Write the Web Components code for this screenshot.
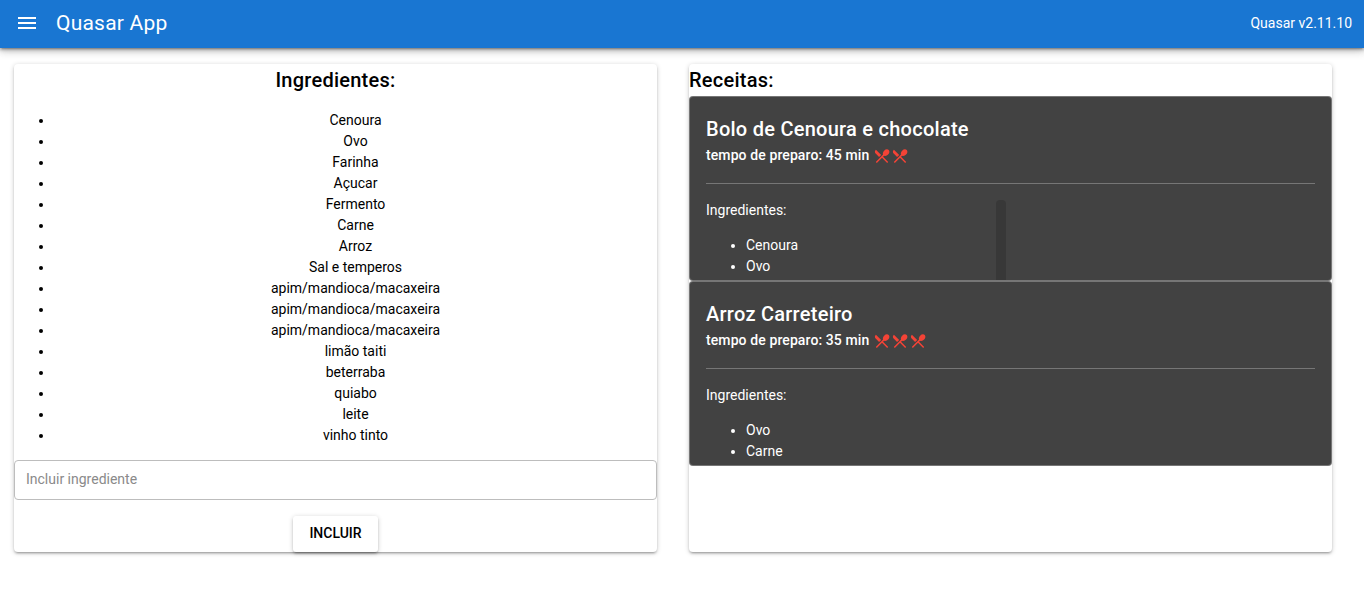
<!DOCTYPE html>
<html lang="pt">
<head>
<meta charset="utf-8">
<title>Quasar App</title>
<style>
html, body { margin: 0; height: 100%; background: #fff; }
body { font-family: Roboto, "Liberation Sans", sans-serif; font-size: 14px; line-height: 21px; color: #000; overflow: hidden; }
</style>
</head>
<body>
<app-header></app-header>
<app-page>
  <ingredient-card></ingredient-card>
  <recipe-panel>
    <recipe-card name="Bolo de Cenoura e chocolate" time="45" spoons="2" items="Cenoura,Ovo" scrollbar></recipe-card>
    <recipe-card name="Arroz Carreteiro" time="35" spoons="3" items="Ovo,Carne"></recipe-card>
  </recipe-panel>
</app-page>

<script>
class AppHeader extends HTMLElement {
  constructor() {
    super()
    this.attachShadow({ mode: 'open' }).innerHTML = `
<style>
:host { display: flex; align-items: center; box-sizing: border-box; height: 48px; background: #1976d2; color: #fff;
  box-shadow: 0 1px 5px rgba(0,0,0,.2), 0 2px 2px rgba(0,0,0,.14), 0 3px 1px -2px rgba(0,0,0,.12), 0 0 10px 2px rgba(0,0,0,.2), 0 0 10px rgba(0,0,0,.14);
  position: relative; padding: 0 12px 2px 8px; }
.menu { width: 38px; height: 38px; display: flex; align-items: center; justify-content: center; }
.title { flex: 1; padding: 0 10px; font-size: 21px; letter-spacing: .01em; line-height: 28px; }
</style>
<div class="menu">
  <svg width="24" height="24" viewBox="0 0 24 24" fill="#fff"><path d="M3 18h18v-2H3v2zm0-5h18v-2H3v2zm0-7v2h18V6H3z"/></svg>
</div>
<div class="title">Quasar App</div>
<div>Quasar v2.11.10</div>`
  }
}

class AppPage extends HTMLElement {
  constructor() {
    super()
    this.attachShadow({ mode: 'open' }).innerHTML = `
<style>
:host { display: grid; grid-template-columns: 643px 643px; gap: 32px; padding: 16px 0 0 14px; }
</style>
<slot></slot>`
  }
}

class IngredientCard extends HTMLElement {
  constructor() {
    super()
    const items = ['Cenoura', 'Ovo', 'Farinha', 'Açucar', 'Fermento', 'Carne', 'Arroz', 'Sal e temperos',
      'apim/mandioca/macaxeira', 'apim/mandioca/macaxeira', 'apim/mandioca/macaxeira',
      'limão taiti', 'beterraba', 'quiabo', 'leite', 'vinho tinto']
    this.attachShadow({ mode: 'open' }).innerHTML = `
<style>
:host { display: flex; flex-direction: column; height: 488px; background: #fff; border-radius: 4px;
  box-shadow: 0 1px 5px rgba(0,0,0,.2), 0 2px 2px rgba(0,0,0,.14), 0 3px 1px -2px rgba(0,0,0,.12); }
h2 { margin: 0; font-size: 20px; font-weight: 500; line-height: 32px; letter-spacing: .0125em; text-align: center; }
ul { margin: 14px 0; padding: 0 0 0 40px; text-align: center; }
.field { height: 36px; padding: 0 11px 2px; border: 1px solid #bdbdbd; border-radius: 4px; display: flex; align-items: center; color: #8a8a8a; }
.actions { display: flex; justify-content: center; margin-top: 16px; }
button { width: 85px; height: 36px; border: 0; border-radius: 3px; background: #fff; color: #000; padding: 0 0 2px;
  font: 500 14px/1.715 Roboto, "Liberation Sans", sans-serif; box-shadow: 0 1px 5px rgba(0,0,0,.2), 0 2px 2px rgba(0,0,0,.14), 0 3px 1px -2px rgba(0,0,0,.12); }
</style>
<h2>Ingredientes:</h2>
<ul>${items.map(i => `<li>${i}</li>`).join('')}</ul>
<div class="field">Incluir ingrediente</div>
<div class="actions"><button>INCLUIR</button></div>`
  }
}

class RecipePanel extends HTMLElement {
  constructor() {
    super()
    this.attachShadow({ mode: 'open' }).innerHTML = `
<style>
:host { display: block; height: 488px; background: #fff; border-radius: 4px;
  box-shadow: 0 1px 5px rgba(0,0,0,.2), 0 2px 2px rgba(0,0,0,.14), 0 3px 1px -2px rgba(0,0,0,.12); }
h2 { margin: 0; font-size: 20px; font-weight: 500; line-height: 32px; letter-spacing: .0125em; }
</style>
<h2>Receitas:</h2>
<slot></slot>`
  }
}

const spoon = `<svg width="18" height="18" viewBox="0 0 24 24" fill="#f44336"><path d="M8.1 13.34l2.83-2.83L3.91 3.5a4.008 4.008 0 0 0 0 5.66l4.19 4.18zm6.78-1.81c1.53.71 3.68.21 5.27-1.38 1.91-1.91 2.28-4.65.81-6.12-1.46-1.46-4.2-1.1-6.12.81-1.59 1.59-2.09 3.74-1.38 5.27L3.7 19.87l1.41 1.41L12 14.41l6.88 6.88 1.41-1.41L13.41 13l1.47-1.47z"/></svg>`

class RecipeCard extends HTMLElement {
  constructor() {
    super()
    const items = this.getAttribute('items').split(',')
    const n = Number(this.getAttribute('spoons'))
    this.attachShadow({ mode: 'open' }).innerHTML = `
<style>
:host { display: block; position: relative; height: 183px; overflow: hidden; background: #424242; color: #fff;
  border: 1px solid rgba(255,255,255,.28); border-radius: 4px; margin-bottom: 0; }
.top { padding: 16px; height: 54px; }
.name { font-size: 20px; font-weight: 500; line-height: 32px; letter-spacing: .26px; }
.sub { display: flex; align-items: center; font-weight: 500; line-height: 20px; height: 20px; letter-spacing: .1px; white-space: pre; }
.sub svg { display: block; }
.sub .icons { display: flex; margin: 1px 0 0 4px; }
hr { margin: 0 16px; border: 0; height: 1px; background: rgba(255,255,255,.28); }
.body { padding: 16px 16px 0; }
ul { margin: 14px 0 0; padding-left: 40px; }
.thumb { position: absolute; left: 306px; top: 103px; bottom: 0; width: 10px; background: rgba(0,0,0,.15); border-radius: 4px 4px 0 0; }
</style>
<div class="top">
  <div class="name">${this.getAttribute('name')}</div>
  <div class="sub"><span>tempo de preparo: ${this.getAttribute('time')} min</span><span class="icons">${spoon.repeat(n)}</span></div>
</div>
<hr>
<div class="body">
  <div>Ingredientes:</div>
  <ul>${items.map(i => `<li>${i}</li>`).join('')}</ul>
</div>
${this.hasAttribute('scrollbar') ? '<div class="thumb"></div>' : ''}`
  }
}

customElements.define('app-header', AppHeader)
customElements.define('app-page', AppPage)
customElements.define('ingredient-card', IngredientCard)
customElements.define('recipe-panel', RecipePanel)
customElements.define('recipe-card', RecipeCard)
</script>
</body>
</html>
